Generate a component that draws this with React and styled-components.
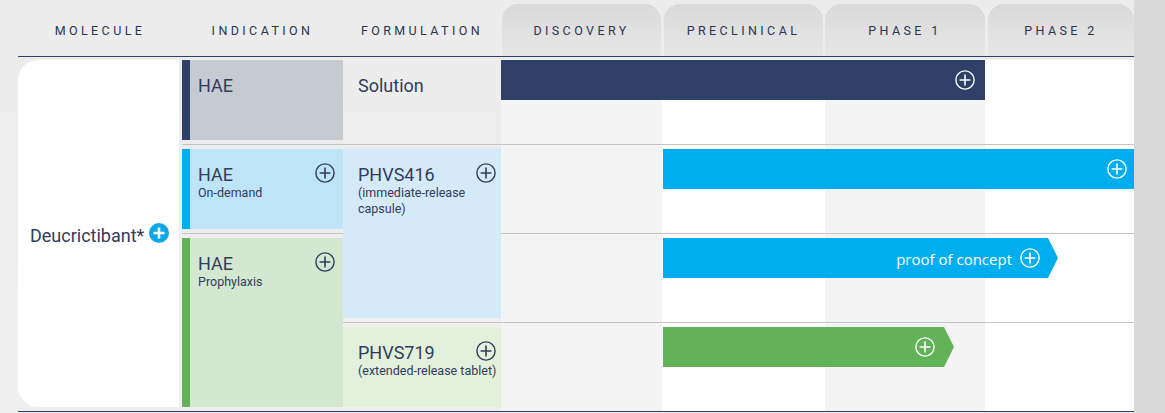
import React from 'react';
import styled, { createGlobalStyle } from 'styled-components';

const NAVY = '#2f4068';
const TEXT = '#323c5b';
const BLUE = '#00aeef';
const GREEN = '#62b257';

const GlobalStyle = createGlobalStyle`
  html, body { margin: 0; padding: 0; }
  body {
    width: 1165px;
    height: 413px;
    overflow: hidden;
    font-family: Roboto, "Liberation Sans", sans-serif;
    color: ${TEXT};
    background:
      linear-gradient(90deg, rgba(0,0,0,0) 1134px, #d9d9d9 1134px),
      linear-gradient(180deg, #ececec 0, #efefef 100%);
  }
`;

const Page = styled.div`
  width: 1116px;
  padding-left: 18px;
`;

const Header = styled.div`
  display: grid;
  grid-template-columns: 164px 161px 158px 161px 163px 160px 149px;
  height: 56px;
  border-bottom: 1px solid ${NAVY};
`;

const HeaderCell = styled.div`
  margin: 4px ${(p) => p.$mr || 0}px 0 ${(p) => p.$ml || 0}px;
  display: flex;
  align-items: center;
  justify-content: center;
  font-size: 12.5px;
  letter-spacing: 3.4px;
  text-transform: uppercase;
  color: #2a3552;
  border-radius: 16px 16px 0 0;
  background: ${(p) =>
    p.$tab ? 'linear-gradient(180deg, #d9d9d9 0%, #e2e2e2 60%, #e6e6e6 100%)' : 'transparent'};
`;

const Board = styled.div`
  margin-top: 3px;
  display: grid;
  grid-template-columns: 161px 3px 161px 158px 161px 163px 160px 149px;
  grid-template-rows: 80px 9px 80px 9px 80px 9px 80px 4px;
  border-bottom: 1px solid ${NAVY};
`;

const Stripe = styled.div`
  grid-column: ${(p) => p.$col};
  grid-row: 1 / -1;
  background: ${(p) => p.$bg};
`;

const Separator = styled.div`
  grid-column: 3 / -1;
  grid-row: ${(p) => p.$row};
  align-self: center;
  height: 1px;
  background: #c4c4c4;
`;

const MoleculeCard = styled.div`
  grid-column: 1;
  grid-row: 1 / 8;
  background: #ffffff;
  border-radius: 20px 0 0 20px;
  display: flex;
  align-items: center;
  gap: 5px;
  padding-left: 12px;
  padding-top: 3px;
`;

const MoleculeName = styled.span`
  font-size: 18px;
  line-height: 21px;
  color: ${TEXT};
`;

const Cell = styled.div`
  grid-column: ${(p) => p.$col};
  grid-row: ${(p) => p.$row};
  background: ${(p) => p.$bg || 'transparent'};
  border-left: ${(p) => (p.$bar ? `8px solid ${p.$bar}` : 'none')};
  padding: 15px ${(p) => p.$pr}px 0 ${(p) => p.$pl}px;
  display: flex;
  flex-direction: column;
`;

const TitleRow = styled.div`
  display: flex;
  justify-content: space-between;
  align-items: flex-start;
`;

const Title = styled.span`
  font-size: 18px;
  line-height: 21px;
  color: ${TEXT};
`;

const Sub = styled.span`
  font-size: 12.5px;
  line-height: 16px;
  color: ${TEXT};
  white-space: ${(p) => (p.$nowrap ? 'nowrap' : 'normal')};
  max-width: ${(p) => p.$max || 'none'};
`;

const Bar = styled.div`
  grid-column: ${(p) => p.$col};
  grid-row: ${(p) => p.$row};
  align-self: start;
  justify-self: start;
  margin-left: ${(p) => p.$ml || 0}px;
  width: ${(p) => (p.$w ? `${p.$w}px` : `calc(100% - ${p.$ml || 0}px)`)};
  height: 40px;
  background: ${(p) => p.$bg};
  display: flex;
  align-items: center;
  justify-content: flex-end;
  gap: 8px;
  padding-right: ${(p) => p.$pr}px;
  box-sizing: border-box;
  clip-path: ${(p) =>
    p.$arrow
      ? 'polygon(0 0, calc(100% - 10px) 0, 100% 50%, calc(100% - 10px) 100%, 0 100%)'
      : 'none'};
`;

const BarLabel = styled.span`
  font-family: "Open Sans", "Liberation Sans", sans-serif;
  font-size: 15px;
  line-height: 20px;
  color: #ffffff;
  margin-top: 1px;
`;

const IconWrap = styled.span`
  display: inline-flex;
  flex-shrink: 0;
  margin-top: ${(p) => p.$mt || 0}px;
`;

function PlusIcon({ variant = 'outline', color = TEXT, mt }) {
  if (variant === 'filled') {
    return (
      <IconWrap $mt={mt}>
        <svg width="20" height="20" viewBox="0 0 20 20">
          <circle cx="10" cy="10" r="10" fill="#0ea8e6" />
          <path d="M10 4.5v11M4.5 10h11" stroke="#fff" strokeWidth="2.6" strokeLinecap="butt" />
        </svg>
      </IconWrap>
    );
  }
  return (
    <IconWrap $mt={mt}>
      <svg width="20" height="20" viewBox="0 0 20 20">
        <circle cx="10" cy="10" r="9.1" fill="none" stroke={color} strokeWidth="1.4" />
        <path d="M10 4.6v10.8M4.6 10h10.8" stroke={color} strokeWidth="1.6" />
      </svg>
    </IconWrap>
  );
}

export default function App() {
  return (
    <>
      <GlobalStyle />
      <Page>
        <Header>
          <HeaderCell>Molecule</HeaderCell>
          <HeaderCell>Indication</HeaderCell>
          <HeaderCell>Formulation</HeaderCell>
          <HeaderCell $tab $ml={1} $mr={1}>Discovery</HeaderCell>
          <HeaderCell $tab $ml={2} $mr={2}>Preclinical</HeaderCell>
          <HeaderCell $tab>Phase 1</HeaderCell>
          <HeaderCell $tab $ml={3}>Phase 2</HeaderCell>
        </Header>

        <Board>
          <Stripe $col={5} $bg="#f4f4f4" />
          <Stripe $col={6} $bg="#ffffff" />
          <Stripe $col={7} $bg="#f4f4f4" />
          <Stripe $col={8} $bg="#ffffff" />

          <Separator $row={2} />
          <Separator $row={4} />
          <Separator $row={6} />

          <MoleculeCard>
            <MoleculeName>Deucrictibant*</MoleculeName>
            <PlusIcon variant="filled" mt={-5} />
          </MoleculeCard>

          <Cell $col={3} $row={1} $bg="#c6cad3" $bar={NAVY} $pl={8} $pr={8}>
            <TitleRow>
              <Title>HAE</Title>
            </TitleRow>
          </Cell>
          <Cell $col={4} $row={1} $pl={15} $pr={5}>
            <TitleRow>
              <Title>Solution</Title>
            </TitleRow>
          </Cell>

          <Cell $col={3} $row={3} $bg="#bee4f7" $bar={BLUE} $pl={8} $pr={8}>
            <TitleRow>
              <Title>HAE</Title>
              <PlusIcon mt={-1} />
            </TitleRow>
            <Sub>On-demand</Sub>
          </Cell>
          <Cell $col={4} $row="3 / 6" $bg="#d4eaf8" $pl={15} $pr={5}>
            <TitleRow>
              <Title>PHVS416</Title>
              <PlusIcon mt={-1} />
            </TitleRow>
            <Sub $max="112px">(immediate-release capsule)</Sub>
          </Cell>

          <Cell $col={3} $row="5 / 8" $bg="#d4e7d0" $bar={GREEN} $pl={8} $pr={8}>
            <TitleRow>
              <Title>HAE</Title>
              <PlusIcon mt={-1} />
            </TitleRow>
            <Sub>Prophylaxis</Sub>
          </Cell>
          <Cell $col={4} $row={7} $bg="#e2f0dc" $pl={15} $pr={5}>
            <TitleRow>
              <Title>PHVS719</Title>
              <PlusIcon mt={-1} />
            </TitleRow>
            <Sub $nowrap>(extended-release tablet)</Sub>
          </Cell>

          <Bar $col="5 / 8" $row={1} $bg="#2f4068" $pr={10}>
            <PlusIcon color="#ffffff" />
          </Bar>
          <Bar $col="6 / -1" $row={3} $ml={1} $bg={BLUE} $pr={7}>
            <PlusIcon color="#ffffff" />
          </Bar>
          <Bar $col="6 / -1" $row={5} $ml={1} $w={395} $bg={BLUE} $pr={18} $arrow>
            <BarLabel>proof of concept</BarLabel>
            <PlusIcon color="#ffffff" />
          </Bar>
          <Bar $col="6 / -1" $row={7} $ml={1} $w={291} $bg={GREEN} $pr={19} $arrow>
            <PlusIcon color="#ffffff" />
          </Bar>
        </Board>
      </Page>
    </>
  );
}
